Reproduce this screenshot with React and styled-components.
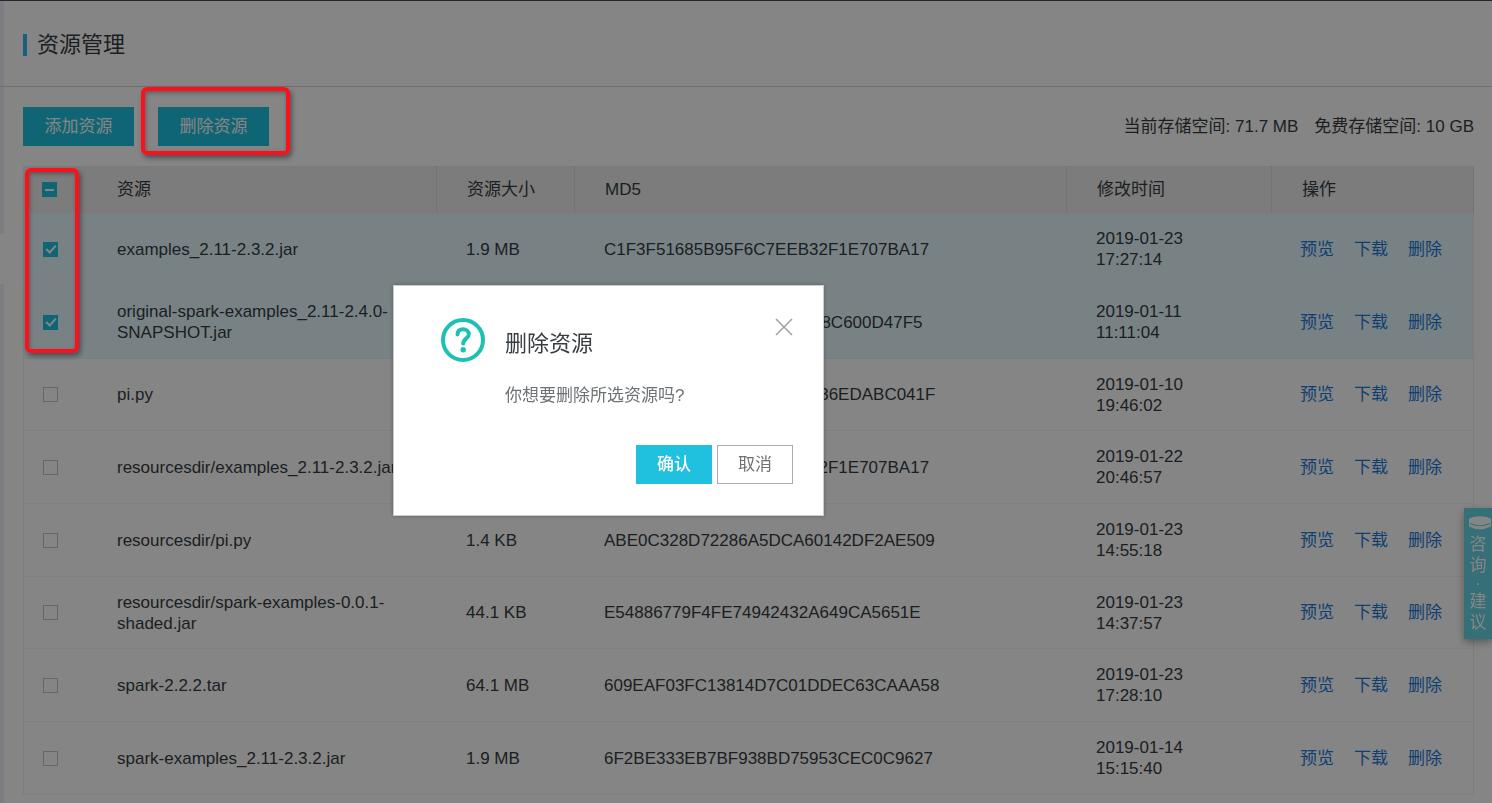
import React, { useState } from 'react';
import styled, { createGlobalStyle, css } from 'styled-components';

const GlobalStyle = createGlobalStyle`
  *, *::after { box-sizing: border-box; }
  body {
    margin: 0;
    background: #fff;
    color: #373d41;
    font-family: "Liberation Sans", "Noto Sans CJK SC", sans-serif;
    font-size: 17px;
    line-height: 21px;
  }
  button, input { font: inherit; margin: 0; }
`;

const Page = styled.div`
  display: flex;
  min-height: 100vh;
  border-top: 1px solid #444a57;
  overflow: hidden;
`;

const Rail = styled.div`
  display: flex;
  flex: none;
  flex-direction: column;
  width: 4px;
`;

const RailPart = styled.div`
  flex: ${(p) => (p.$height ? 'none' : '1')};
  height: ${(p) => (p.$height ? `${p.$height}px` : 'auto')};
  background: ${(p) => (p.$open ? '#fff' : '#eef0f5')};
`;

const Main = styled.main`
  flex: 1;
  min-width: 0;
`;

const Header = styled.header`
  margin-left: -4px;
  padding: 33px 18px 30px 23px;
  border-bottom: 1px solid #d5d5d5;
`;

const Title = styled.h1`
  margin: 0;
  padding-left: 10px;
  border-left: 4px solid #2fb9f0;
  font-size: 22px;
  font-weight: 400;
  line-height: 22px;
`;

const Content = styled.section`
  padding: 20px 18px 8px 19px;
`;

const Toolbar = styled.div`
  display: flex;
  align-items: center;
  gap: 24px;
  margin-bottom: 20px;
`;

const Storage = styled.div`
  display: flex;
  gap: 16px;
  margin-left: auto;
`;

const Button = styled.button`
  height: 39px;
  min-width: ${(p) => (p.$wide ? 111 : 76)}px;
  padding: 0 20px;
  border: 1px solid ${(p) => (p.$plain ? '#a9abad' : '#20c1de')};
  border-radius: 0;
  background: ${(p) => (p.$plain ? '#fff' : '#20c1de')};
  color: ${(p) => (p.$plain ? '#6d7275' : '#fff')};
  font-weight: ${(p) => (p.$strong ? 500 : 400)};
  white-space: nowrap;
  cursor: pointer;
`;

const Anchor = styled.div`
  position: relative;
`;

const Callout = styled.div`
  position: absolute;
  z-index: 20;
  border: 4px solid #fd0f1b;
  border-radius: 6px;
  box-shadow: 2px 3px 5px rgba(0, 0, 0, 0.4), inset 1px 2px 4px rgba(0, 0, 0, 0.3);
  pointer-events: none;
  ${(p) =>
    p.$around === 'button'
      ? css`inset: -20px -21px -9px -17px;`
      : css`top: 2px; left: 2px; width: 54px; height: 185px;`}
`;

const Table = styled.table`
  width: 100%;
  table-layout: fixed;
  border-collapse: separate;
  border-spacing: 0;
`;

const Col = styled.col`
  width: ${(p) => (p.$width ? `${p.$width}px` : 'auto')};
`;

const HeadCell = styled.th`
  height: 47px;
  padding: 0 19px 0 30px;
  border-left: ${(p) => (p.$divided ? '1px solid #dcdcdc' : '0')};
  background: #ededed;
  font-weight: 400;
  text-align: left;
  &:first-child { padding: 0 19px; }
  &:last-child { border-right: 1px solid #dcdcdc; }
`;

const Cell = styled.td`
  height: 73px;
  padding: 0 ${(p) => (p.$narrow ? 30 : 19)}px 0 30px;
  border-bottom: 1px solid #f3f3f3;
  tr:nth-child(3n) > & { height: 72px; }
  &:first-child { padding: 0 19px; border-left: 1px solid #ededed; }
  &:last-child { border-right: 1px solid #ededed; }
`;

const Row = styled.tr`
  background: ${(p) => (p.$selected ? '#e6faff' : '#fff')};
  ${(p) => p.$selected && css`& > ${Cell} { border-bottom-color: #e2f5f9; }`}
`;

const Tick = styled.input`
  display: block;
  position: relative;
  appearance: none;
  width: 15px;
  height: 15px;
  border: 1px solid #c4c6cf;
  background: #fff;
  &:checked, &:indeterminate { border-color: #20c1de; background: #20c1de; }
  &:checked::after {
    content: "";
    position: absolute;
    top: 0;
    left: 4px;
    width: 6px;
    height: 10px;
    border: solid #fff;
    border-width: 0 2px 2px 0;
    transform: rotate(42deg);
  }
  &:indeterminate::after {
    content: "";
    position: absolute;
    top: 6px;
    left: 2px;
    width: 9px;
    height: 2px;
    background: #fff;
  }
`;

const Actions = styled.div`
  display: flex;
  gap: 20px;
  margin-left: -1px;
`;

const Action = styled.a`
  color: #1d7ad9;
  text-decoration: none;
  white-space: nowrap;
`;

const Consult = styled.a`
  position: fixed;
  top: 508px;
  right: 0;
  display: flex;
  flex-direction: column;
  align-items: center;
  width: 28px;
  padding: 8px 0 6px;
  background: #66d5e5;
  box-shadow: 0 3px 8px rgba(0, 0, 0, 0.35);
  color: #fff;
  text-decoration: none;
  svg { display: block; margin: 0 0 4px 3px; }
`;

const Char = styled.span`
  height: ${(p) => (p.$dot ? 15 : 21)}px;
  line-height: ${(p) => (p.$dot ? 15 : 21)}px;
`;

const Backdrop = styled.div`
  position: fixed;
  inset: 0;
  z-index: 10;
  background: rgba(0, 0, 0, 0.48);
`;

const Dialog = styled.div`
  position: fixed;
  top: 285px;
  left: 393px;
  z-index: 30;
  width: 431px;
  padding: 32px 30px 31px 47px;
  border: 1px solid #ccc;
  background: #fff;
  box-shadow: 0 0 4px rgba(0, 0, 0, 0.3);
`;

const DialogTop = styled.div`
  display: flex;
  align-items: flex-start;
  gap: 20px;
`;

const DialogText = styled.div`
  flex: 1;
  padding-top: 15px;
`;

const DialogTitle = styled.h2`
  margin: 0 0 30px;
  font-size: 22px;
  font-weight: 400;
  line-height: 22px;
`;

const Message = styled.p`
  margin: 0;
  color: #6d7275;
`;

const Close = styled.button`
  padding: 0;
  border: 0;
  background: none;
  cursor: pointer;
  svg { display: block; }
`;

const DialogActions = styled.div`
  display: flex;
  justify-content: flex-end;
  gap: 5px;
  margin-top: 39px;
`;

const rows = [
  ['examples_2.11-2.3.2.jar', '1.9 MB', 'C1F3F51685B95F6C7EEB32F1E707BA17', '2019-01-23 17:27:14'],
  ['original-spark-examples_2.11-2.4.0-SNAPSHOT.jar', '1.9 MB', 'A10D5B7209413F6082171B8C600D47F5', '2019-01-11 11:11:04'],
  ['pi.py', '1.4 KB', '5A0C9E3D7B4118B26D07B36EDABC041F', '2019-01-10 19:46:02'],
  ['resourcesdir/examples_2.11-2.3.2.jar', '1.9 MB', 'C1F3F51685B95F6C7EEB32F1E707BA17', '2019-01-22 20:46:57'],
  ['resourcesdir/pi.py', '1.4 KB', 'ABE0C328D72286A5DCA60142DF2AE509', '2019-01-23 14:55:18'],
  ['resourcesdir/spark-examples-0.0.1-shaded.jar', '44.1 KB', 'E54886779F4FE74942432A649CA5651E', '2019-01-23 14:37:57'],
  ['spark-2.2.2.tar', '64.1 MB', '609EAF03FC13814D7C01DDEC63CAAA58', '2019-01-23 17:28:10'],
  ['spark-examples_2.11-2.3.2.jar', '1.9 MB', '6F2BE333EB7BF938BD75953CEC0C9627', '2019-01-14 15:15:40'],
];

export default function App() {
  const [selected, setSelected] = useState([0, 1]);
  const [open, setOpen] = useState(true);
  const all = selected.length === rows.length;
  const toggle = (i) =>
    setSelected((s) => (s.includes(i) ? s.filter((n) => n !== i) : [...s, i]));

  return (
    <>
      <GlobalStyle />
      <Page>
        <Rail>
          <RailPart $height={233} />
          <RailPart $height={50} $open />
          <RailPart />
        </Rail>
        <Main>
          <Header>
            <Title>资源管理</Title>
          </Header>
          <Content>
            <Toolbar>
              <Button type="button" $wide>添加资源</Button>
              <Anchor>
                <Button type="button" $wide onClick={() => setOpen(true)}>删除资源</Button>
                <Callout $around="button" />
              </Anchor>
              <Storage>
                <span>当前存储空间: 71.7 MB</span>
                <span>免费存储空间: 10 GB</span>
              </Storage>
            </Toolbar>
            <Anchor>
              <Table>
                <colgroup>
                  <Col $width={64} />
                  <Col $width={349} />
                  <Col $width={138} />
                  <Col />
                  <Col $width={205} />
                  <Col $width={203} />
                </colgroup>
                <thead>
                  <tr>
                    <HeadCell>
                      <Tick
                        type="checkbox"
                        aria-label="全选"
                        checked={all}
                        ref={(el) => {
                          if (el) el.indeterminate = selected.length > 0 && !all;
                        }}
                        onChange={() => setSelected(all ? [] : rows.map((_, i) => i))}
                      />
                    </HeadCell>
                    <HeadCell>资源</HeadCell>
                    <HeadCell $divided>资源大小</HeadCell>
                    <HeadCell $divided>MD5</HeadCell>
                    <HeadCell $divided>修改时间</HeadCell>
                    <HeadCell $divided>操作</HeadCell>
                  </tr>
                </thead>
                <tbody>
                  {rows.map(([name, size, md5, time], i) => (
                    <Row key={name} $selected={selected.includes(i)}>
                      <Cell>
                        <Tick
                          type="checkbox"
                          aria-label={name}
                          checked={selected.includes(i)}
                          onChange={() => toggle(i)}
                        />
                      </Cell>
                      <Cell>{name}</Cell>
                      <Cell>{size}</Cell>
                      <Cell>{md5}</Cell>
                      <Cell $narrow>{time}</Cell>
                      <Cell>
                        <Actions>
                          <Action href="#preview">预览</Action>
                          <Action href="#download">下载</Action>
                          <Action href="#delete">删除</Action>
                        </Actions>
                      </Cell>
                    </Row>
                  ))}
                </tbody>
              </Table>
              <Callout $around="column" />
            </Anchor>
          </Content>
        </Main>
      </Page>
      <Consult href="#consult">
        <svg width="22" height="14" viewBox="0 0 22 14" aria-hidden="true">
          <path d="M0 2.5 Q11 -2 22 2.5 V10.5 Q11 16 0 10.5 Z" fill="#fff" />
          <path d="M1 7.5 Q11 12 21 7.5" fill="none" stroke="#66d5e5" strokeWidth="1.2" />
        </svg>
        <Char>咨</Char>
        <Char>询</Char>
        <Char $dot>·</Char>
        <Char>建</Char>
        <Char>议</Char>
      </Consult>
      {open && (
        <>
          <Backdrop />
          <Dialog role="dialog" aria-modal="true" aria-labelledby="dialog-title">
            <DialogTop>
              <svg width="44" height="44" viewBox="0 0 44 44" fill="none" aria-hidden="true">
                <circle cx="22" cy="22" r="20" stroke="#1dc1b3" strokeWidth="4" />
                <path
                  d="M16.5 16.4 C16.7 12.9 19 11.3 22 11.3 C25.3 11.3 27.8 13.3 27.8 16.4 C27.8 20.6 22.2 20.8 22.2 25.6"
                  stroke="#1dc1b3"
                  strokeWidth="4"
                  strokeLinecap="round"
                />
                <circle cx="22.2" cy="31.8" r="2.7" fill="#1dc1b3" />
              </svg>
              <DialogText>
                <DialogTitle id="dialog-title">删除资源</DialogTitle>
                <Message>你想要删除所选资源吗?</Message>
              </DialogText>
              <Close type="button" aria-label="关闭" onClick={() => setOpen(false)}>
                <svg width="18" height="18" viewBox="0 0 18 18">
                  <path d="M1 1 L17 17 M17 1 L1 17" stroke="#a0a2a4" strokeWidth="1.6" />
                </svg>
              </Close>
            </DialogTop>
            <DialogActions>
              <Button type="button" $strong onClick={() => setOpen(false)}>确认</Button>
              <Button type="button" $plain onClick={() => setOpen(false)}>取消</Button>
            </DialogActions>
          </Dialog>
        </>
      )}
    </>
  );
}
